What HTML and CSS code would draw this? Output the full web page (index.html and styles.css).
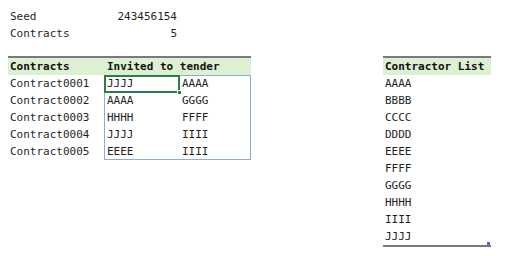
FILE: index.html
```html
<!DOCTYPE html>
<html>
<head>
<meta charset="utf-8">
<link rel="stylesheet" href="styles.css">
</head>
<body>
<div class="sheet">
  <div class="info">
    <div class="irow"><span class="lbl">Seed</span><span class="val">243456154</span></div>
    <div class="irow"><span class="lbl">Contracts</span><span class="val">5</span></div>
  </div>
  <div class="tables">
    <div class="tbl left">
      <div class="hdr"><span class="ca">Contracts</span><span class="cbc">Invited to tender</span></div>
      <div class="body">
        <div class="row"><span class="ca">Contract0001</span><span class="cb">JJJJ</span><span class="cc">AAAA</span></div>
        <div class="row"><span class="ca">Contract0002</span><span class="cb">AAAA</span><span class="cc">GGGG</span></div>
        <div class="row"><span class="ca">Contract0003</span><span class="cb">HHHH</span><span class="cc">FFFF</span></div>
        <div class="row"><span class="ca">Contract0004</span><span class="cb">JJJJ</span><span class="cc">IIII</span></div>
        <div class="row"><span class="ca">Contract0005</span><span class="cb">EEEE</span><span class="cc">IIII</span></div>
        <div class="selection"></div>
        <div class="active"><span class="handle"></span></div>
      </div>
    </div>
    <div class="tbl right">
      <div class="hdr"><span class="cl">Contractor List</span></div>
      <div class="body list">
        <div class="row"><span class="cl">AAAA</span></div>
        <div class="row"><span class="cl">BBBB</span></div>
        <div class="row"><span class="cl">CCCC</span></div>
        <div class="row"><span class="cl">DDDD</span></div>
        <div class="row"><span class="cl">EEEE</span></div>
        <div class="row"><span class="cl">FFFF</span></div>
        <div class="row"><span class="cl">GGGG</span></div>
        <div class="row"><span class="cl">HHHH</span></div>
        <div class="row"><span class="cl">IIII</span></div>
        <div class="row"><span class="cl">JJJJ</span></div>
        <span class="corner"></span>
      </div>
    </div>
  </div>
</div>
</body>
</html>
```
FILE: styles.css
```css
* { box-sizing: border-box; }
html, body { margin: 0; padding: 0; background: #ffffff; }
body {
  font-family: "DejaVu Sans Mono", "Liberation Mono", monospace;
  font-size: 11px;
  color: #1f1f1f;
  width: 514px;
  height: 256px;
  overflow: hidden;
}
.sheet { padding: 8px 0 0 8px; }
.info { display: flex; flex-direction: column; }
.irow { display: flex; height: 17px; line-height: 17px; }
.irow .lbl { width: 96px; padding-left: 2px; }
.irow .val { width: 75px; text-align: right; padding-right: 2px; }

.tables { display: flex; align-items: flex-start; margin-top: 14px; }
.tbl { display: flex; flex-direction: column; }
.left { width: 243px; }
.right { width: 108px; margin-left: 132px; }

.hdr {
  display: flex;
  height: 19px;
  line-height: 17px;
  border-top: 2px solid #7a7a7a;
  background: #dcf0d2;
  font-weight: bold;
  color: #111;
}
.body { position: relative; display: flex; flex-direction: column; }
.row { display: flex; height: 17px; line-height: 17px; }
.ca { width: 96px; padding-left: 2px; }
.cb { width: 75px; padding-left: 3px; }
.cc { width: 72px; padding-left: 3px; }
.cbc { width: 147px; padding-left: 3px; }
.cl { width: 108px; padding-left: 2px; }

.selection {
  position: absolute;
  left: 96px;
  top: 0;
  width: 147px;
  height: 85px;
  border: 1px solid #8fabdc;
}
.active {
  position: absolute;
  left: 96px;
  top: 0;
  width: 76px;
  height: 18px;
  border: 2px solid #2f7a4f;
}
.handle {
  position: absolute;
  right: -4px;
  bottom: -4px;
  width: 5px;
  height: 5px;
  background: #2f7a4f;
  border: 1px solid #fff;
}
.list { border-bottom: 2px solid #7a7a7a; padding-bottom: 0; }
.corner {
  position: absolute;
  right: 1px;
  bottom: 0;
  width: 3px;
  height: 3px;
  background: #4a6fb5;
}
```
